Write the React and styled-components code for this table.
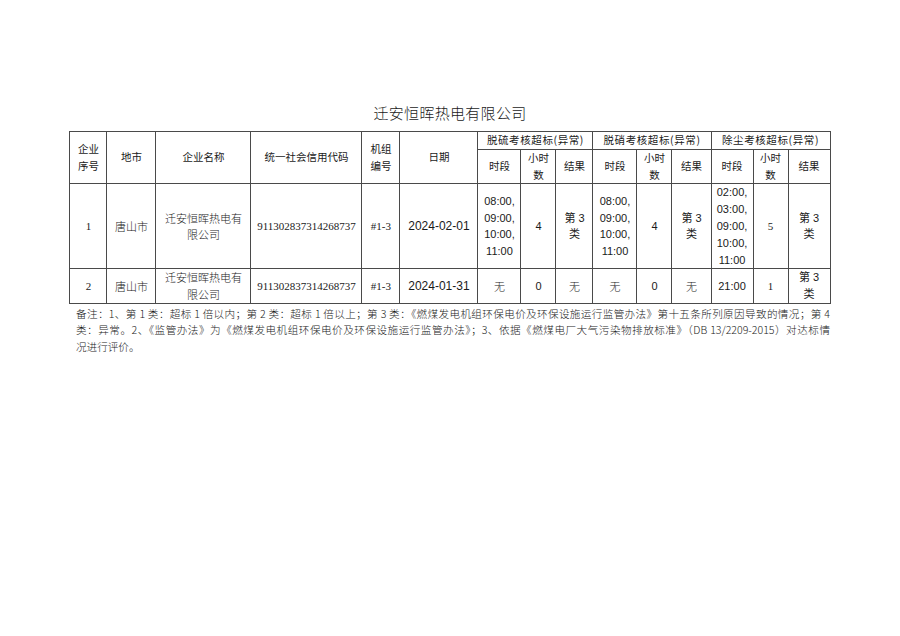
import React from "react";
import styled, { createGlobalStyle } from "styled-components";

const GlobalStyle = createGlobalStyle`
  html, body {
    margin: 0;
    padding: 0;
    background: #ffffff;
  }
  body {
    font-family: "Liberation Serif", "Noto Sans CJK SC", serif;
    color: #1f1f1f;
  }
`;

const Page = styled.div`
  width: 900px;
  min-height: 636px;
  box-sizing: border-box;
  padding-top: 103px;
  display: flex;
  flex-direction: column;
  align-items: center;
`;

const Title = styled.h1`
  margin: 0 0 8px;
  font-family: "Noto Sans CJK SC", sans-serif;
  font-weight: 300;
  font-size: 15px;
  line-height: 20px;
  letter-spacing: 0.3px;
  color: #1a1a1a;
`;

const Table = styled.table`
  width: 760px;
  table-layout: fixed;
  border-collapse: collapse;
`;

const HeadCell = styled.th`
  border: 1px solid #4a4a4a;
  padding: 0 4px;
  font-family: "Noto Sans CJK SC", sans-serif;
  font-weight: 400;
  font-size: 10.5px;
  line-height: 16.8px;
  letter-spacing: ${(p) => (p.$wide ? "0.6px" : "0")};
  text-align: center;
  vertical-align: middle;
  color: #1a1a1a;
`;

const fontFor = {
  serif: `"Liberation Serif", "Noto Sans CJK SC", serif`,
  sans: `"Liberation Sans", "Noto Sans CJK SC", sans-serif`,
  cjk: `"Noto Sans CJK SC", sans-serif`,
};

const Cell = styled.td`
  border: 1px solid #4a4a4a;
  padding: 0 ${(p) => (p.$pad ? p.$pad : 4)}px;
  font-family: ${(p) => fontFor[p.$font || "serif"]};
  font-weight: ${(p) => (p.$font === "cjk" ? 300 : 400)};
  font-size: ${(p) => p.$size || 11}px;
  line-height: 16.8px;
  text-align: center;
  vertical-align: middle;
  color: #1a1a1a;
  word-break: normal;
`;

const Note = styled.div`
  width: 760px;
  box-sizing: border-box;
  padding: 2px 0 0 6px;
  font-family: "Noto Sans CJK SC", sans-serif;
  font-weight: 300;
  font-size: 10.6px;
  line-height: 16.5px;
  color: #1a1a1a;
`;

const NoteLine = styled.div`
  white-space: nowrap;
  text-align: ${(p) => (p.$justify ? "justify" : "left")};
  text-align-last: ${(p) => (p.$justify ? "justify" : "left")};
`;

const widths = [37, 49, 95, 111, 38, 78, 43, 35, 37, 44, 35, 39, 42, 35, 42];

const rows = [
  {
    no: "1",
    city: "唐山市",
    name: "迁安恒晖热电有限公司",
    code: "911302837314268737",
    unit: "#1-3",
    date: "2024-02-01",
    so2: ["08:00, 09:00, 10:00, 11:00", "4", "第 3 类"],
    nox: ["08:00, 09:00, 10:00, 11:00", "4", "第 3 类"],
    dust: ["02:00, 03:00, 09:00, 10:00, 11:00", "5", "第 3 类"],
  },
  {
    no: "2",
    city: "唐山市",
    name: "迁安恒晖热电有限公司",
    code: "911302837314268737",
    unit: "#1-3",
    date: "2024-01-31",
    so2: ["无", "0", "无"],
    nox: ["无", "0", "无"],
    dust: ["21:00", "1", "第 3 类"],
  },
];

const Group = ({ data, serifCount }) => (
  <>
    <Cell $font={data[0] === "无" ? "cjk" : "sans"}>{data[0]}</Cell>
    <Cell $font={serifCount ? "serif" : "sans"}>{data[1]}</Cell>
    <Cell $font={data[2] === "无" ? "cjk" : "sans"}>{data[2]}</Cell>
  </>
);

export default function App() {
  return (
    <>
      <GlobalStyle />
      <Page>
        <Title>迁安恒晖热电有限公司</Title>
        <Table>
          <colgroup>
            {widths.map((w, i) => (
              <col key={i} style={{ width: w }} />
            ))}
          </colgroup>
          <thead>
            <tr>
              <HeadCell rowSpan={2}>企业序号</HeadCell>
              <HeadCell rowSpan={2}>地市</HeadCell>
              <HeadCell rowSpan={2}>企业名称</HeadCell>
              <HeadCell rowSpan={2}>统一社会信用代码</HeadCell>
              <HeadCell rowSpan={2}>机组编号</HeadCell>
              <HeadCell rowSpan={2}>日期</HeadCell>
              <HeadCell colSpan={3} $wide>
                脱硫考核超标(异常)
              </HeadCell>
              <HeadCell colSpan={3} $wide>
                脱硝考核超标(异常)
              </HeadCell>
              <HeadCell colSpan={3} $wide>
                除尘考核超标(异常)
              </HeadCell>
            </tr>
            <tr>
              {[0, 1, 2].map((g) => (
                <React.Fragment key={g}>
                  <HeadCell>时段</HeadCell>
                  <HeadCell>小时数</HeadCell>
                  <HeadCell>结果</HeadCell>
                </React.Fragment>
              ))}
            </tr>
          </thead>
          <tbody>
            {rows.map((r) => (
              <tr key={r.no}>
                <Cell>{r.no}</Cell>
                <Cell $font="cjk">{r.city}</Cell>
                <Cell $font="cjk" $pad={7}>
                  {r.name}
                </Cell>
                <Cell>{r.code}</Cell>
                <Cell>{r.unit}</Cell>
                <Cell $font="sans" $size={12}>
                  {r.date}
                </Cell>
                <Group data={r.so2} />
                <Group data={r.nox} />
                <Group data={r.dust} serifCount />
              </tr>
            ))}
          </tbody>
        </Table>
        <Note>
          <NoteLine $justify>
            备注：1、第 1 类：超标 1 倍以内；第 2 类：超标 1 倍以上；第 3 类：《燃煤发电机组环保电价及环保设施运行监管办法》第十五条所列原因导致的情况；第 4
          </NoteLine>
          <NoteLine $justify>
            类：异常。2、《监管办法》为《燃煤发电机组环保电价及环保设施运行监管办法》；3、依据《燃煤电厂大气污染物排放标准》（DB 13/2209-2015）对达标情
          </NoteLine>
          <NoteLine>况进行评价。</NoteLine>
        </Note>
      </Page>
    </>
  );
}
